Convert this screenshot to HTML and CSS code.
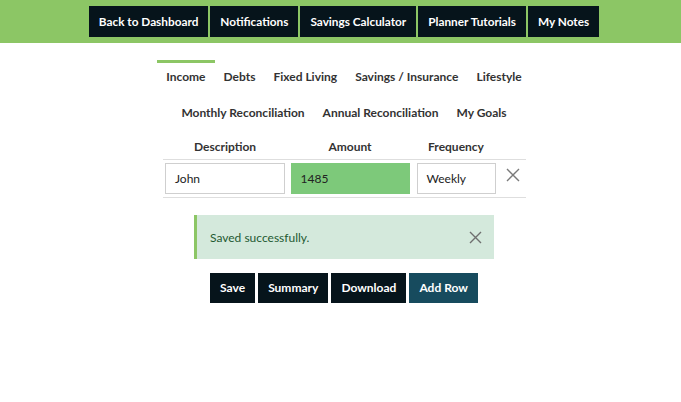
FILE: index.html
```html
<!DOCTYPE html>
<html>
<head>
<meta charset="utf-8">
<link rel="stylesheet" href="styles.css">
</head>
<body>
<header class="topbar">
  <nav class="topnav">
    <a class="topbtn">Back to Dashboard</a>
    <a class="topbtn">Notifications</a>
    <a class="topbtn">Savings Calculator</a>
    <a class="topbtn">Planner Tutorials</a>
    <a class="topbtn">My Notes</a>
  </nav>
</header>
<main class="main">
  <ul class="tabs">
    <li class="tab active">Income</li>
    <li class="tab">Debts</li>
    <li class="tab">Fixed Living</li>
    <li class="tab">Savings / Insurance</li>
    <li class="tab">Lifestyle</li>
    <li class="tab">Monthly Reconciliation</li>
    <li class="tab">Annual Reconciliation</li>
    <li class="tab">My Goals</li>
  </ul>
  <div class="table">
    <div class="th">Description</div>
    <div class="th">Amount</div>
    <div class="th">Frequency</div>
    <div class="th"></div>
    <div class="td"><div class="input w-desc">John</div></div>
    <div class="td"><div class="input w-amt amount">1485</div></div>
    <div class="td"><div class="input w-freq">Weekly</div></div>
    <div class="td"><svg class="xicon" width="14" height="14" viewBox="0 0 14 14"><path d="M1 1 L13 13 M13 1 L1 13" stroke="#7a7a7a" stroke-width="1.4" fill="none"/></svg></div>
  </div>
  <div class="alert">
    <span class="alert-text">Saved successfully.</span>
    <svg class="alert-x" width="13" height="13" viewBox="0 0 13 13"><path d="M1 1 L12 12 M12 1 L1 12" stroke="#6f6f6f" stroke-width="1.4" fill="none"/></svg>
  </div>
  <div class="actions">
    <a class="btn">Save</a>
    <a class="btn">Summary</a>
    <a class="btn">Download</a>
    <a class="btn btn-teal">Add Row</a>
  </div>
</main>
</body>
</html>
```
FILE: styles.css
```css
* { box-sizing: border-box; }
body {
  margin: 0;
  font-family: Lato, "Liberation Sans", sans-serif;
  background: #fff;
  color: #333;
}
.topbar {
  background: #8cc665;
  height: 43px;
  padding: 6px 0 0 7px;
}
.topnav {
  display: flex;
  justify-content: center;
  gap: 2px;
}
.topbtn {
  display: block;
  height: 31px;
  line-height: 31px;
  padding: 0 10px;
  background: #06141b;
  color: #fff;
  font-size: 11.8px;
  font-weight: 700;
  white-space: nowrap;
}
.main {
  padding-left: 7px;
  display: flex;
  flex-direction: column;
  align-items: center;
}
.tabs {
  list-style: none;
  margin: 17px 0 0;
  padding: 0;
  width: 385px;
  display: flex;
  flex-wrap: wrap;
  justify-content: center;
}
.tab {
  height: 36px;
  padding: 4px 9px 0;
  border-top: 3px solid transparent;
  font-size: 12px;
  font-weight: 700;
  color: #333;
  line-height: 20px;
  white-space: nowrap;
}
.tab.active { border-top-color: #8cc665; }
.table {
  display: grid;
  grid-template-columns: 125px 125px 87px 26px;
  width: 363px;
}
.th {
  font-size: 12px;
  font-weight: 700;
  text-align: center;
  color: #333;
  height: 28px;
  padding-top: 7px;
  line-height: 16px;
  border-bottom: 1px solid #dedede;
}
.td {
  height: 38px;
  display: flex;
  align-items: center;
  justify-content: center;
  border-bottom: 1px solid #dedede;
}
.input {
  height: 31px;
  line-height: 29px;
  border: 1px solid #cfcfcf;
  padding-left: 9px;
  font-size: 12px;
  color: #222;
  background: #fff;
}
.w-desc { width: 120px; }
.w-amt { width: 119px; }
.w-freq { width: 79px; }
.amount { background: #7dc97a; border-color: #7dc97a; }
.xicon { margin-top: -8px; }
.alert {
  margin-top: 17px;
  width: 300px;
  height: 44px;
  background: #d4e9dc;
  border-left: 3px solid #8cc665;
  display: flex;
  align-items: center;
  justify-content: space-between;
  padding: 0 12px 0 13px;
}
.alert-text {
  font-size: 12px;
  color: #1f5a32;
}
.actions {
  margin-top: 14px;
  display: flex;
  gap: 3px;
}
.btn {
  display: block;
  height: 30px;
  line-height: 30px;
  padding: 0 10px;
  background: #06141b;
  color: #fff;
  font-size: 12px;
  font-weight: 700;
}
.btn-teal { background: #174b5e; }
```
